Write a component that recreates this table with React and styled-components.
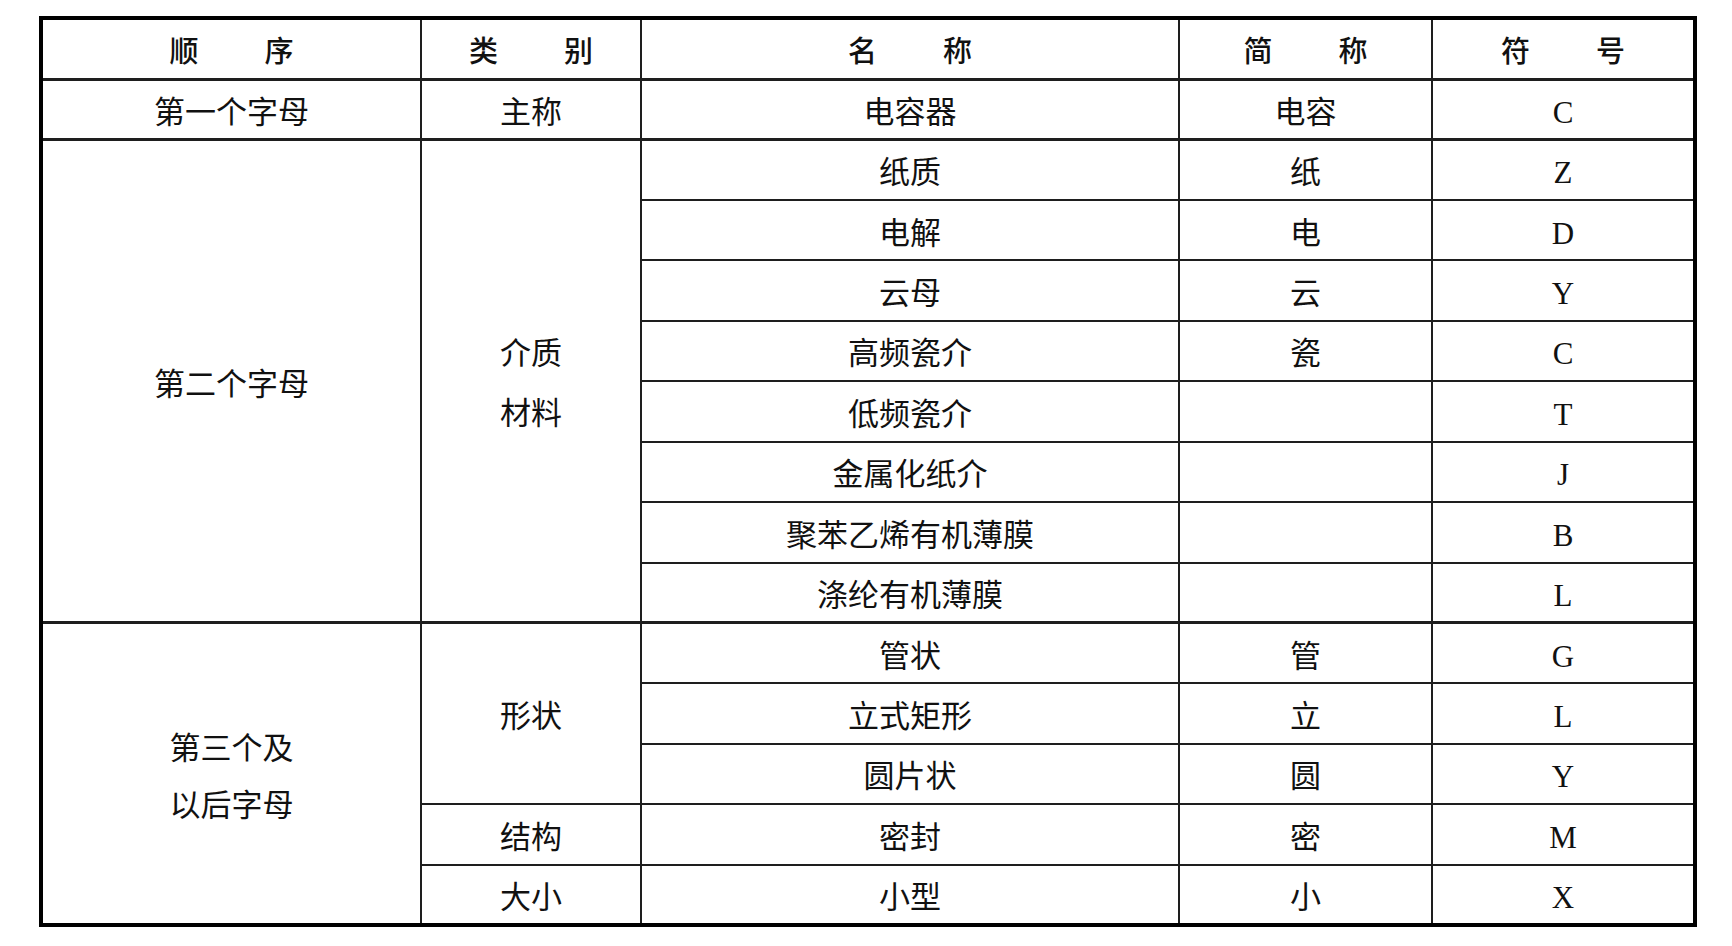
import styled, { createGlobalStyle } from "styled-components"

const GlobalStyle = createGlobalStyle`
  html, body {
    margin: 0;
    padding: 0;
    background: #ffffff;
  }
`

const Page = styled.div`
  padding: 16px 0 0 39px;
`

const Table = styled.table`
  border-collapse: collapse;
  table-layout: fixed;
  width: 1654px;
  border: 4px solid #000;
  color: #111;
`

const Row = styled.tr`
  height: ${(props) => (props.$head ? "61px" : "60.45px")};
`

const HeadCell = styled.th`
  border: 2px solid #1e1e1e;
  border-bottom-width: 3px;
  padding: 2px 0 0;
  font-family: "Noto Sans CJK SC", "Liberation Sans", sans-serif;
  font-weight: 500;
  font-size: 29px;
  line-height: 1;
`

const HeadLabel = styled.div`
  display: flex;
  justify-content: center;
  gap: 66px;
`

const Cell = styled.td`
  border: 2px solid #1e1e1e;
  border-bottom-width: ${(props) => (props.$thick ? "3px" : "2px")};
  padding: 6px 0 0;
  text-align: center;
  vertical-align: middle;
  font-family: "Liberation Serif", "Noto Sans CJK SC", serif;
  font-size: 31px;
  line-height: 1.2;
`

const Stack = styled.span`
  display: block;
  line-height: ${(props) => props.$lh}px;
`

function Head({ text }) {
  return (
    <HeadCell>
      <HeadLabel>
        {text.split("").map((c, i) => (
          <span key={i}>{c}</span>
        ))}
      </HeadLabel>
    </HeadCell>
  )
}

export default function App() {
  return (
    <Page>
      <GlobalStyle />
      <Table>
        <colgroup>
          <col style={{ width: 380 }} />
          <col style={{ width: 220 }} />
          <col style={{ width: 538 }} />
          <col style={{ width: 253 }} />
          <col style={{ width: 263 }} />
        </colgroup>
        <thead>
          <Row $head>
            <Head text="顺序" />
            <Head text="类别" />
            <Head text="名称" />
            <Head text="简称" />
            <Head text="符号" />
          </Row>
        </thead>
        <tbody>
          <Row>
            <Cell $thick>第一个字母</Cell>
            <Cell $thick>主称</Cell>
            <Cell $thick>电容器</Cell>
            <Cell $thick>电容</Cell>
            <Cell $thick>C</Cell>
          </Row>
          <Row>
            <Cell rowSpan={8} $thick>第二个字母</Cell>
            <Cell rowSpan={8} $thick>
              <Stack $lh={60}>介质</Stack>
              <Stack $lh={60}>材料</Stack>
            </Cell>
            <Cell>纸质</Cell>
            <Cell>纸</Cell>
            <Cell>Z</Cell>
          </Row>
          <Row>
            <Cell>电解</Cell>
            <Cell>电</Cell>
            <Cell>D</Cell>
          </Row>
          <Row>
            <Cell>云母</Cell>
            <Cell>云</Cell>
            <Cell>Y</Cell>
          </Row>
          <Row>
            <Cell>高频瓷介</Cell>
            <Cell>瓷</Cell>
            <Cell>C</Cell>
          </Row>
          <Row>
            <Cell>低频瓷介</Cell>
            <Cell></Cell>
            <Cell>T</Cell>
          </Row>
          <Row>
            <Cell>金属化纸介</Cell>
            <Cell></Cell>
            <Cell>J</Cell>
          </Row>
          <Row>
            <Cell>聚苯乙烯有机薄膜</Cell>
            <Cell></Cell>
            <Cell>B</Cell>
          </Row>
          <Row>
            <Cell $thick>涤纶有机薄膜</Cell>
            <Cell $thick></Cell>
            <Cell $thick>L</Cell>
          </Row>
          <Row>
            <Cell rowSpan={5}>
              <Stack $lh={57}>第三个及</Stack>
              <Stack $lh={57}>以后字母</Stack>
            </Cell>
            <Cell rowSpan={3}>形状</Cell>
            <Cell>管状</Cell>
            <Cell>管</Cell>
            <Cell>G</Cell>
          </Row>
          <Row>
            <Cell>立式矩形</Cell>
            <Cell>立</Cell>
            <Cell>L</Cell>
          </Row>
          <Row>
            <Cell>圆片状</Cell>
            <Cell>圆</Cell>
            <Cell>Y</Cell>
          </Row>
          <Row>
            <Cell>结构</Cell>
            <Cell>密封</Cell>
            <Cell>密</Cell>
            <Cell>M</Cell>
          </Row>
          <Row>
            <Cell>大小</Cell>
            <Cell>小型</Cell>
            <Cell>小</Cell>
            <Cell>X</Cell>
          </Row>
        </tbody>
      </Table>
    </Page>
  )
}
